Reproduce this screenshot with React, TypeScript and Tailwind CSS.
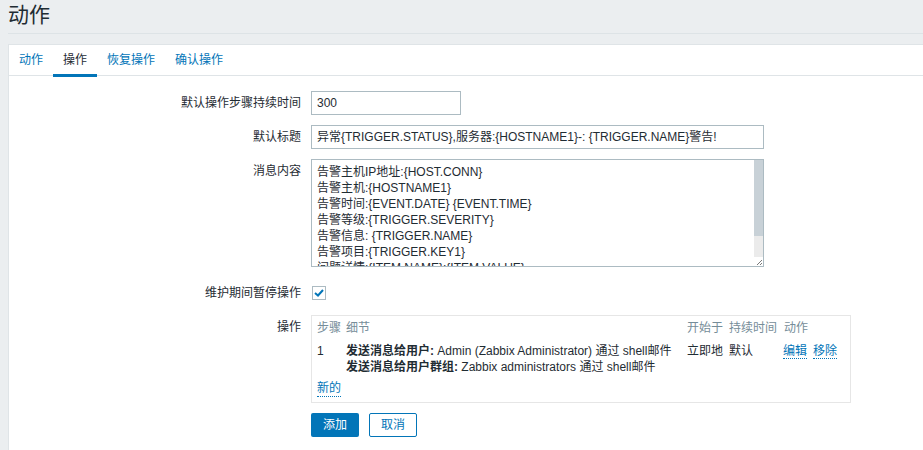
import React from "react";

const FONT = "font-['Liberation_Sans','Noto_Sans_CJK_SC',sans-serif]";

function Label({ children }: { children: React.ReactNode }) {
  return (
    <div className="h-[24px] leading-[24px] text-right text-[12px] text-[#1f2c33] whitespace-nowrap">
      {children}
    </div>
  );
}

const msgLines = [
  "告警主机IP地址:{HOST.CONN}",
  "告警主机:{HOSTNAME1}",
  "告警时间:{EVENT.DATE} {EVENT.TIME}",
  "告警等级:{TRIGGER.SEVERITY}",
  "告警信息: {TRIGGER.NAME}",
  "告警项目:{TRIGGER.KEY1}",
  "问题详情:{ITEM.NAME}:{ITEM.VALUE}",
];

export default function App() {
  return (
    <div className={`w-[923px] h-[450px] overflow-hidden bg-[#ebeef0] pl-[8px] ${FONT}`}>
      {/* header */}
      <div className="h-[34px] border-b border-[#dde3e6] flex items-center pb-[4px]">
        <h1 className="text-[21px] leading-[24px] text-[#1f2c33] font-normal">动作</h1>
      </div>

      {/* panel */}
      <div className="mt-[10px] bg-white border-t border-l border-[#dfe4e7] h-[420px]">
        {/* tabs */}
        <div className="flex h-[31px] border-b border-[#dfe4e7]">
          <div className="h-[31px] px-[10px] flex items-center pt-[1px] border-b-[3px] border-transparent text-[12px] text-[#0275b8]">动作</div>
          <div className="h-[32px] px-[10px] flex items-center pt-[1px] border-b-[3px] border-[#0275b8] text-[12px] text-[#1f2c33]">操作</div>
          <div className="h-[31px] px-[10px] flex items-center pt-[1px] border-b-[3px] border-transparent text-[12px] text-[#0275b8]">恢复操作</div>
          <div className="h-[31px] px-[10px] flex items-center pt-[1px] border-b-[3px] border-transparent text-[12px] text-[#0275b8]">确认操作</div>
        </div>

        {/* form */}
        <div className="grid grid-cols-[292px_auto] gap-x-[10px] pt-[15px] text-[12px] text-[#1f2c33]">
          {/* row 1 */}
          <Label>默认操作步骤持续时间</Label>
          <div className="mb-[10px]">
            <div className="w-[150px] h-[24px] border border-[#acbbc2] px-[5px] leading-[22px]">300</div>
          </div>

          {/* row 2 */}
          <Label>默认标题</Label>
          <div className="mb-[10px]">
            <div className="w-[453px] h-[24px] border border-[#acbbc2] px-[5px] leading-[22px] whitespace-nowrap overflow-hidden">
              异常{"{TRIGGER.STATUS}"},服务器:{"{HOSTNAME1}"}-: {"{TRIGGER.NAME}"}警告!
            </div>
          </div>

          {/* row 3 */}
          <Label>消息内容</Label>
          <div className="mb-[14px]">
            <div className="w-[453px] h-[108px] border border-[#acbbc2] flex overflow-hidden">
              <div className="flex-1 pl-[5px] pt-[4px] leading-[16px] whitespace-nowrap overflow-hidden">
                {msgLines.map((l, i) => (
                  <div key={i}>{l}</div>
                ))}
              </div>
              <div className="w-[9px] flex flex-col bg-[#ebebeb]">
                <div className="h-[76px] bg-[#c8d1d7]" />
                <div className="flex-1" />
                <div className="h-[9px] flex items-end justify-end bg-white">
                  <svg width="7" height="7" viewBox="0 0 7 7">
                    <path d="M6 1 L1 6 M6 4 L4 6" stroke="#7a7a7a" strokeWidth="1" />
                  </svg>
                </div>
              </div>
            </div>
          </div>

          {/* row 4 */}
          <Label>维护期间暂停操作</Label>
          <div className="mb-[10px] h-[24px] flex items-center pl-[1px]">
            <div className="w-[14px] h-[14px] border border-[#acbbc2] flex items-center justify-center bg-white">
              <svg width="10" height="8" viewBox="0 0 10 8">
                <path d="M1 4 L4 6.5 L9 1" fill="none" stroke="#0275b8" strokeWidth="2" />
              </svg>
            </div>
          </div>

          {/* row 5 */}
          <Label>操作</Label>
          <div className="mb-[10px]">
            <div className="w-[540px] h-[88px] border border-[#e6e6e6] px-[5px] pt-[4px]">
              <div className="grid grid-cols-[29px_341px_42px_55px_1fr] leading-[16px] text-[#768d99]">
                <div>步骤</div>
                <div>细节</div>
                <div>开始于</div>
                <div>持续时间</div>
                <div>动作</div>
              </div>
              <div className="grid grid-cols-[29px_341px_42px_54px_1fr] leading-[16px] mt-[7px] text-[#1f2c33]">
                <div>1</div>
                <div className="whitespace-nowrap">
                  <div>
                    <span className="font-bold">发送消息给用户:</span> Admin (Zabbix Administrator) 通过 shell邮件
                  </div>
                  <div>
                    <span className="font-bold">发送消息给用户群组:</span> Zabbix administrators 通过 shell邮件
                  </div>
                </div>
                <div>立即地</div>
                <div>默认</div>
                <div className="flex gap-[6px]">
                  <span className="text-[#0275b8] border-b border-dotted border-[#0275b8] h-[16px]">编辑</span>
                  <span className="text-[#0275b8] border-b border-dotted border-[#0275b8] h-[16px]">移除</span>
                </div>
              </div>
              <div className="mt-[5px] leading-[16px]">
                <span className="text-[#0275b8] border-b border-dotted border-[#0275b8] inline-block h-[17px]">新的</span>
              </div>
            </div>
          </div>

          {/* buttons */}
          <div />
          <div className="flex gap-[10px]">
            <div className="w-[48px] h-[24px] rounded-[2px] bg-[#0275b8] text-white flex items-center justify-center">添加</div>
            <div className="w-[48px] h-[24px] rounded-[2px] border border-[#0275b8] bg-white text-[#0275b8] flex items-center justify-center">取消</div>
          </div>
        </div>
      </div>
    </div>
  );
}
